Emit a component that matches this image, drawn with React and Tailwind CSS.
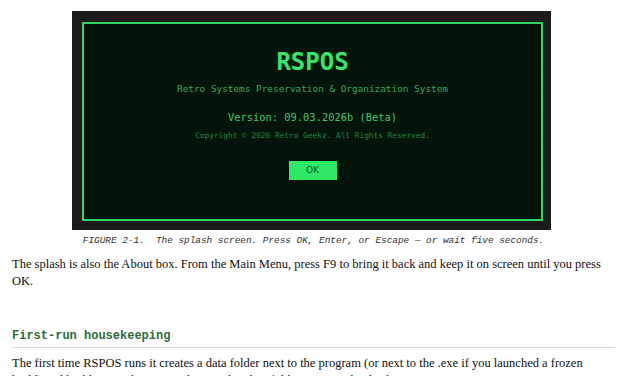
const splashLines = {
  title: "RSPOS",
  subtitle: "Retro Systems Preservation & Organization System",
  version: "Version: 09.03.2026b (Beta)",
  copyright: "Copyright © 2026 Retro Geekz. All Rights Reserved.",
};

function Splash() {
  return (
    <div className="ml-[72px] mt-[11px] w-[479px] bg-[#1b1b1b] pl-[10px] pr-[8px] pt-[11px] pb-[9px]">
      <div className="h-[199px] border-2 border-[#2fd463] bg-[repeating-linear-gradient(0deg,#03130a_0px,#03130a_2px,#05180d_2px,#05180d_3px)] flex flex-col items-center pt-[24px] font-['DejaVu_Sans_Mono',monospace]">
        <div className="text-[24px] leading-[28px] font-bold text-[#2fe86b]">{splashLines.title}</div>
        <div className="mt-[6px] text-[9.4px] leading-[14px] text-[#3aa65a]">{splashLines.subtitle}</div>
        <div className="mt-[14px] text-[10.4px] leading-[14px] text-[#45c266]">{splashLines.version}</div>
        <div className="mt-[7px] text-[7.8px] leading-[10px] text-[#238540]">{splashLines.copyright}</div>
        <button className="mt-[20px] w-[48px] h-[19px] bg-[#2ee866] text-[#0d5a25] text-[9px] leading-[19px] font-['DejaVu_Sans',sans-serif]">
          OK
        </button>
      </div>
    </div>
  );
}

export default function App() {
  return (
    <div className="w-[627px] h-[376px] overflow-hidden bg-white">
      <Splash />
      {/* figure caption */}
      <p className="mt-[4px] text-center text-[9.4px] leading-[14px] italic text-[#333] font-['Liberation_Mono',monospace] whitespace-pre">
        {"FIGURE 2-1.  The splash screen. Press OK, Enter, or Escape — or wait five seconds."}
      </p>
      <div className="px-[12px] font-['Liberation_Serif',serif] text-[#111] text-[12.5px] leading-[17px]">
        <p className="mt-[8px]">
          The splash is also the About box. From the Main Menu, press F9 to bring it back and keep it on screen until you press OK.
        </p>
        <h2 className="mt-[38px] pb-[3px] border-b border-[#dcdcdc] font-['Liberation_Mono',monospace] font-bold text-[12px] leading-[16px] text-[#2e6b3f]">
          First-run housekeeping
        </h2>
        <p className="mt-[7px]">
          The first time RSPOS runs it creates a data folder next to the program (or next to the .exe if you launched a frozen build) and builds everything it needs. Into that data folder it writes the database.
        </p>
      </div>
    </div>
  );
}
